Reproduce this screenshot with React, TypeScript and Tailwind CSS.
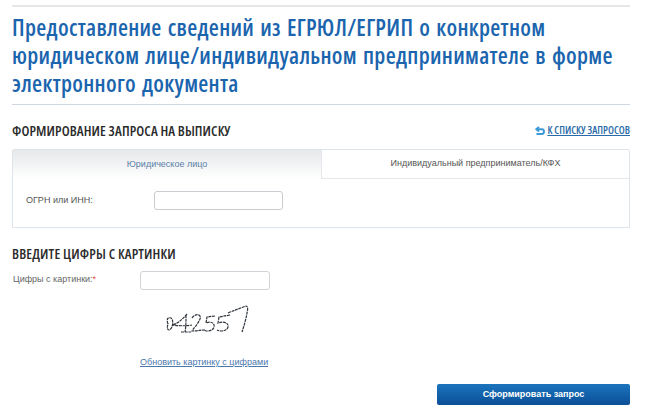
const narrow = "font-['Open_Sans',sans-serif] [font-stretch:75%]";

function Captcha() {
  return (
    <svg width="90" height="32" viewBox="0 0 90 32" fill="none" stroke="#2f353c" strokeWidth="1.2" strokeDasharray="3 0.7" aria-label="captcha">
      <path d="M3 19 C1 14 3 12 6 13 C9 15 8 24 4 25 C2 25 2 22 3 19 Z" />
      <path d="M22 9 C17 15 12 19 7 20 C13 21 20 21 27 20 M21 10 C21 16 21 22 20 27 M16 27 L26 27" />
      <path d="M27 13 C30 8 37 9 35 14 C33 19 28 24 27 26 C32 26 36 25 40 25" />
      <path d="M50 11 L42 12 L41 18 C46 16 50 18 49 22 C48 26 42 27 39 25" />
      <path d="M65 10 L54 12 L53 18 C59 16 64 18 63 22 C62 26 56 27 52 25" />
      <path d="M63 8 C70 5 76 3 81 1 C83 1 83 4 82 8 C81 14 79 21 77 27" />
    </svg>
  );
}

export default function App() {
  return (
    <div className="w-[660px] h-[407px] overflow-hidden bg-white px-3 pt-[5px] font-['Liberation_Sans',Arial,sans-serif]">
      <div className="w-[618px]">
        <div className="border-t-2 border-[#e6e6e6]" />
        <h1 className={`${narrow} mt-[6px] text-[23px] leading-[28px] font-semibold tracking-[0.3px] [word-spacing:1.5px] text-[#1b65ae] whitespace-nowrap`}>
          Предоставление сведений из ЕГРЮЛ/ЕГРИП о конкретном
          <br />
          юридическом лице/индивидуальном предпринимателе в форме
          <br />
          электронного документа
        </h1>
        <div className="mt-[7px] border-t border-[#cfd8e3]" />

        <div className="mt-[17px] h-[17px] flex items-center justify-between">
          <h2 className={`${narrow} text-[14px] leading-[17px] font-semibold tracking-[0.1px] text-[#2b2b2b]`}>
            ФОРМИРОВАНИЕ ЗАПРОСА НА ВЫПИСКУ
          </h2>
          <a className="flex items-center gap-[2px] text-[#2a6aa8]">
            <svg width="10" height="10" viewBox="0 0 10 10" fill="none" stroke="#3a9ad9" strokeWidth="2">
              <path d="M4 1 L1.4 3.2 L4 5.4" />
              <path d="M1.5 3.2 H7 C9.6 3.2 9.6 8 7 8 H1.5" />
            </svg>
            <span className={`${narrow} text-[10.5px] leading-[13px] font-semibold underline`}>К СПИСКУ ЗАПРОСОВ</span>
          </a>
        </div>

        <div className="mt-[10px] h-[79px] border border-[#dde4ea] rounded-t-[2px]">
          <div className="flex h-[29px] text-[9px]">
            <div className="w-[308px] flex items-center justify-center text-[#5a7fa8] bg-gradient-to-b from-[#e6e8ea] to-white">
              Юридическое лицо
            </div>
            <div className="flex-1 flex items-center justify-center text-[#555] border-l border-b border-[#e4e8ec]">
              Индивидуальный предприниматель/КФХ
            </div>
          </div>
          <div className="flex items-center pl-[13px] pt-[12px]">
            <label className="w-[128px] text-[9px] text-[#555]">ОГРН или ИНН:</label>
            <input className="w-[129px] h-[19px] bg-white border border-[#c8ccd0] rounded-[3px]" />
          </div>
        </div>

        <h2 className={`${narrow} mt-[17px] text-[14px] leading-[18px] font-semibold tracking-[0.15px] text-[#2b2b2b]`}>
          ВВЕДИТЕ ЦИФРЫ С КАРТИНКИ
        </h2>

        <div className="mt-[8px] flex items-start">
          <label className="w-[128px] pl-px pt-px text-[9px] leading-[15px] text-[#666]">
            Цифры с картинки:<span className="text-[#e0503c]">*</span>
          </label>
          <input className="w-[130px] h-[19px] bg-white border border-[#d0d4d8] rounded-[3px]" />
        </div>

        <div className="mt-[15px] pl-[153px]">
          <Captcha />
        </div>

        <div className="mt-[11px] pl-[128px]">
          <a className="text-[9px] leading-[12px] text-[#4c78ad] underline">Обновить картинку с цифрами</a>
        </div>

        <div className="mt-[12px] flex justify-end">
          <button className="w-[193px] h-[21px] rounded-[2px] bg-gradient-to-b from-[#1b74bd] to-[#0b4f97] text-white text-[9px] font-bold">
            Сформировать запрос
          </button>
        </div>
      </div>
    </div>
  );
}
